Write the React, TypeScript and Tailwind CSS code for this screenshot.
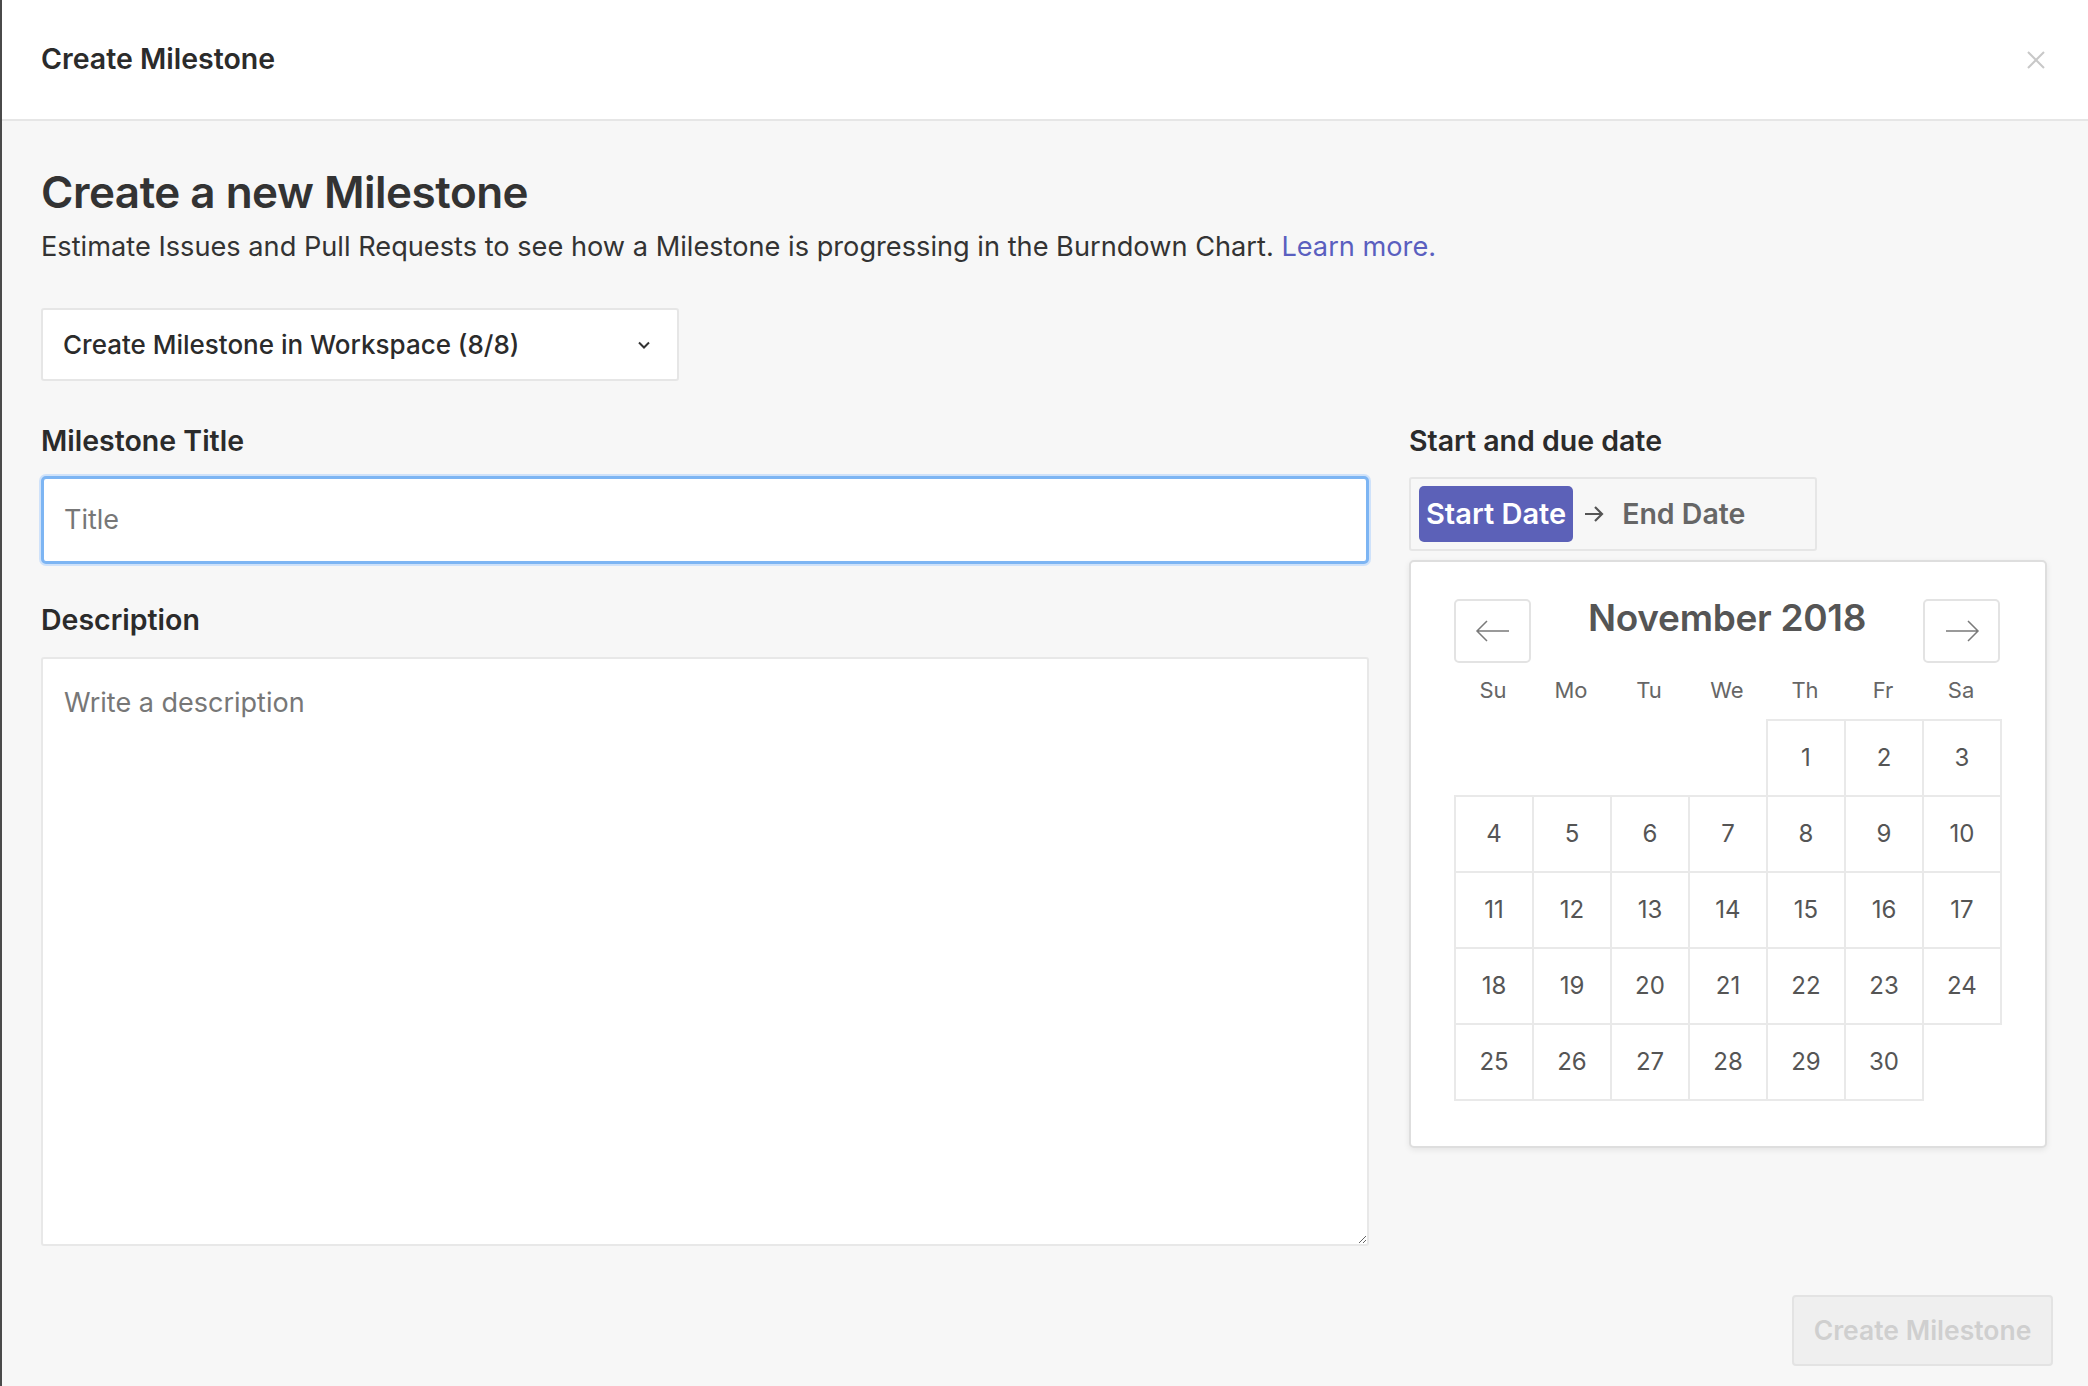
import React from "react";

const days: (number | null)[][] = [
  [null, null, null, null, 1, 2, 3],
  [4, 5, 6, 7, 8, 9, 10],
  [11, 12, 13, 14, 15, 16, 17],
  [18, 19, 20, 21, 22, 23, 24],
  [25, 26, 27, 28, 29, 30, null],
];

function ArrowLeft() {
  return (
    <svg width="36" height="24" viewBox="0 0 36 24" fill="none" stroke="#7a7a7a" strokeWidth="1.5">
      <path d="M34 12H2M12 2L2 12l10 10" />
    </svg>
  );
}
function ArrowRight() {
  return (
    <svg width="36" height="24" viewBox="0 0 36 24" fill="none" stroke="#7a7a7a" strokeWidth="1.5">
      <path d="M2 12h32M24 2l10 10-10 10" />
    </svg>
  );
}

export default function App() {
  return (
    <div className="w-[2088px] h-[1386px] overflow-hidden bg-[#f7f7f7] border-l-2 border-[#4a4a4a] font-['Inter','Noto_Sans',sans-serif] text-[#333]">
      <header className="h-[121px] bg-white border-b-2 border-[#e6e6e6] flex items-center justify-between pl-[39px] pr-[42px]">
        <h1 className="text-[28.5px] font-semibold text-[#2b2b2b]">Create Milestone</h1>
        <svg width="20" height="20" viewBox="0 0 20 20" stroke="#c8c8c8" strokeWidth="2" fill="none">
          <path d="M2 2l16 16M18 2L2 18" />
        </svg>
      </header>

      <main className="px-[39px] pt-[46px]">
        <h2 className="text-[44px] leading-[50px] font-semibold tracking-[-0.5px] text-[#333]">Create a new Milestone</h2>
        <p className="mt-[14px] text-[27.2px] leading-[32px] text-[#333]">
          Estimate Issues and Pull Requests to see how a Milestone is progressing in the Burndown Chart.{" "}
          <a className="text-[#5a5fbf]">Learn more.</a>
        </p>

        <div className="mt-[45px] w-[638px] h-[73px] bg-white border-2 border-[#e6e6e6] rounded-[3px] flex items-center justify-between pl-[20px] pr-[26px]">
          <span className="text-[26px] font-medium text-[#2b2b2b]">Create Milestone in Workspace (8/8)</span>
          <svg width="14" height="10" viewBox="0 0 14 10" fill="none" stroke="#333" strokeWidth="2">
            <path d="M2 2.5l5 5 5-5" />
          </svg>
        </div>

        <div className="mt-[43px] flex gap-[40px]">
          <div className="w-[1328px] flex flex-col">
            <label className="text-[28.5px] leading-[34px] font-semibold text-[#2b2b2b]">Milestone Title</label>
            <div className="mt-[18px] h-[88px] bg-white rounded-[5px] border-[3px] border-[#7db5f3] shadow-[0_0_0_2px_#cfe2fa] flex items-center pl-[20px]">
              <span className="text-[27px] text-[#777]">Title</span>
            </div>
            <label className="mt-[39px] text-[28.5px] leading-[34px] font-semibold text-[#2b2b2b]">Description</label>
            <textarea
              placeholder="Write a description"
              className="mt-[20px] h-[589px] w-full bg-white border-2 border-[#e8e8e8] rounded-[3px] px-[21px] pt-[27px] text-[27px] leading-[34px] placeholder:text-[#777] outline-none"
            />
          </div>

          <div className="w-[638px] flex flex-col">
            <label className="text-[28.5px] leading-[34px] font-semibold text-[#2b2b2b]">Start and due date</label>
            <div className="mt-[19px] w-[408px] h-[74px] border-2 border-[#e6e6e6] rounded-[3px] flex items-center pl-[8px]">
              <span className="h-[56px] px-[7px] rounded-[5px] bg-[#5c61b8] text-white text-[29px] font-semibold flex items-center">Start Date</span>
              <svg className="ml-[11px]" width="20" height="18" viewBox="0 0 20 18" fill="none" stroke="#555" strokeWidth="2.2">
                <path d="M1 9h17M11 2l7 7-7 7" />
              </svg>
              <span className="ml-[18px] text-[28.5px] font-semibold text-[#666]">End Date</span>
            </div>

            <div className="mt-[9px] h-[588px] bg-white border-2 border-[#dedede] rounded-[5px] shadow-[0_2px_6px_rgba(0,0,0,0.08)] pt-[37px] pl-[43px] pr-[45px]">
              <div className="flex justify-between items-start h-[63px]">
                <button className="w-[77px] h-[64px] border-2 border-[#e3e3e3] rounded-[5px] bg-white flex items-center justify-center">
                  <ArrowLeft />
                </button>
                <span className="text-[37px] leading-[38px] font-semibold text-[#555] tracking-[-0.3px]">November 2018</span>
                <button className="w-[77px] h-[64px] border-2 border-[#e3e3e3] rounded-[5px] bg-white flex items-center justify-center">
                  <ArrowRight />
                </button>
              </div>
              <div className="grid grid-cols-7 w-[546px] h-[57px] items-center">
                {["Su", "Mo", "Tu", "We", "Th", "Fr", "Sa"].map((d) => (
                  <span key={d} className="text-center text-[22px] text-[#666]">{d}</span>
                ))}
              </div>
              <table className="border-collapse w-[548px] table-fixed">
                <tbody>
                  {days.map((row, i) => (
                    <tr key={i} className="h-[76px]">
                      {row.map((d, j) =>
                        d === null ? (
                          <td key={j} className="w-[78px]" />
                        ) : (
                          <td key={j} className="w-[78px] border-2 border-[#e9e9e9] text-center text-[24px] text-[#555]">
                            {d}
                          </td>
                        )
                      )}
                    </tr>
                  ))}
                </tbody>
              </table>
            </div>
          </div>
        </div>

        <div className="mt-[49px] flex justify-end">
          <button className="w-[261px] h-[71px] bg-[#efefef] border-2 border-[#e3e3e3] rounded-[4px] text-[26.5px] font-semibold text-[#cfcfcf] mr-[-4px]">
            Create Milestone
          </button>
        </div>
      </main>
    </div>
  );
}
